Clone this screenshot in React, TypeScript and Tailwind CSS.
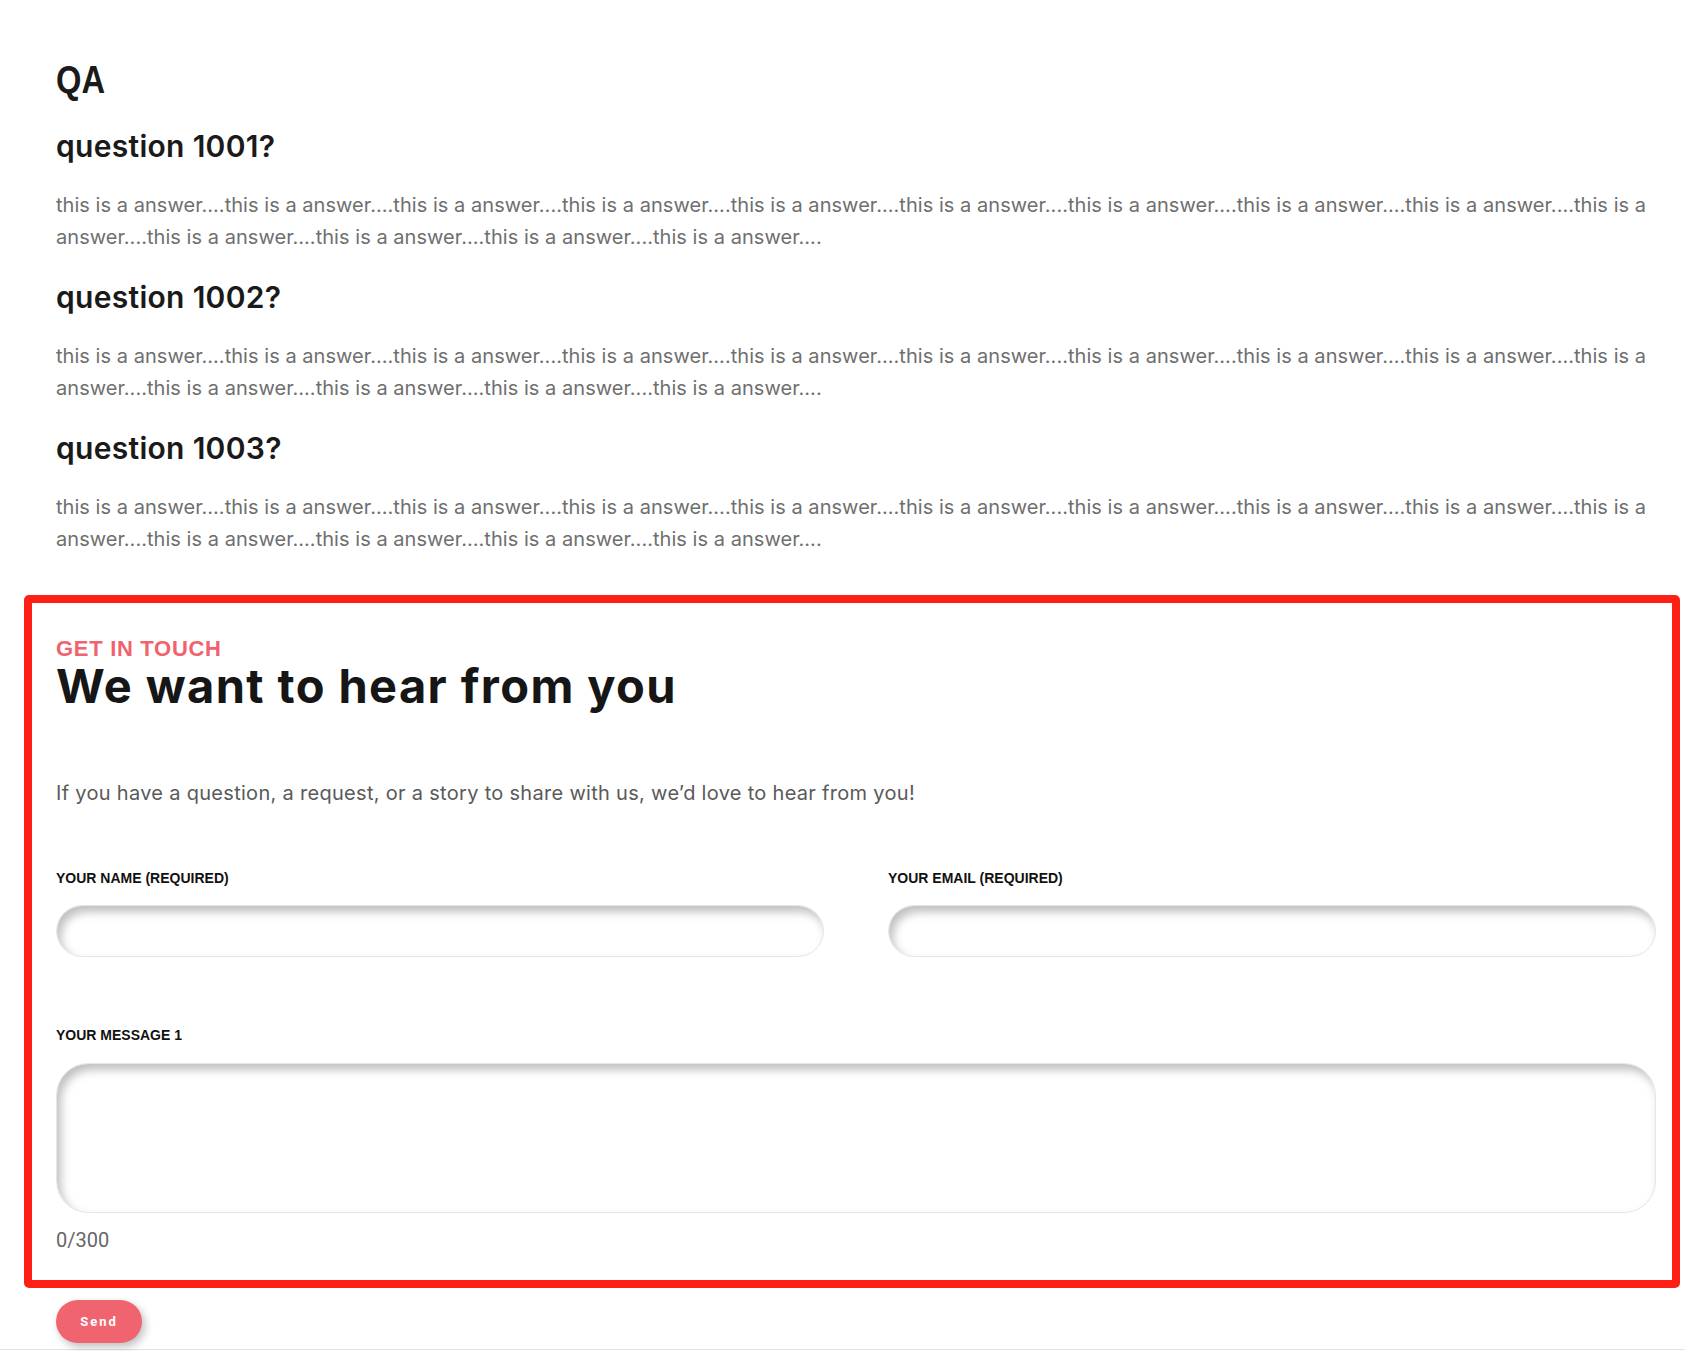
import React from "react";

const ANSWER = "this is a answer....".repeat(14);

function QA({ q, first }: { q: string; first?: boolean }) {
  return (
    <div className={first ? "mt-[29px]" : "mt-[26px]"}>
      <h3 className="font-['Inter',sans-serif] font-semibold text-[30px] leading-[36px] tracking-[0.3px] text-[#1a1a1a]">
        {q}
      </h3>
      <p className="mt-[25px] font-['Inter',sans-serif] text-[20px] leading-[32px] tracking-[0.04px] text-[#6f6f6f]">
        {ANSWER}
      </p>
    </div>
  );
}

export default function App() {
  return (
    <div className="min-h-[1351px] bg-white">
      <div className="pl-[56px] pt-[61px]">
        <div className="w-[1600px]">
          <h2 className="font-['Liberation_Sans',sans-serif] font-bold text-[38px] leading-[38px] text-[#1a1a1a]">
            <span className="inline-block origin-left scale-x-[0.86]">QA</span>
          </h2>
          <QA q="question 1001?" first />
          <QA q="question 1002?" />
          <QA q="question 1003?" />
        </div>
      </div>

      <div className="ml-[24px] mt-[40px] w-[1656px] rounded-[5px] border-[8px] border-[#ff2015] pl-[24px] pr-[16px] pt-[35px] pb-[30px]">
        <div className="font-['Liberation_Sans',sans-serif] font-bold text-[22px] leading-[22px] tracking-[0.7px] text-[#f0626e]">
          GET IN TOUCH
        </div>
        <h2 className="mt-[2px] font-['Inter',sans-serif] font-bold text-[47px] leading-[47px] tracking-[1.4px] text-[#161616]">
          We want to hear from you
        </h2>
        <p className="mt-[68px] font-['Inter',sans-serif] font-normal text-[20px] leading-[32px] tracking-[0.3px] text-[#5a5a5a]">
          If you have a question, a request, or a story to share with us, we’d love to hear from you!
        </p>

        <div className="mt-[62px] grid grid-cols-2 gap-x-[64px]">
          <div>
            <label className="block font-['Liberation_Sans',sans-serif] font-bold text-[14px] leading-[14px] text-[#111111]">
              YOUR NAME (REQUIRED)
            </label>
            <input
              type="text"
              className="mt-[20px] block h-[52px] w-full rounded-full border border-[#e6e6e6] bg-white px-6 outline-none shadow-[inset_4px_6px_10px_rgba(0,0,0,0.25)]"
            />
          </div>
          <div>
            <label className="block font-['Liberation_Sans',sans-serif] font-bold text-[14px] leading-[14px] text-[#111111]">
              YOUR EMAIL (REQUIRED)
            </label>
            <input
              type="email"
              className="mt-[20px] block h-[52px] w-full rounded-full border border-[#e6e6e6] bg-white px-6 outline-none shadow-[inset_4px_6px_10px_rgba(0,0,0,0.25)]"
            />
          </div>
        </div>

        <label className="mt-[71px] block font-['Liberation_Sans',sans-serif] font-bold text-[14px] leading-[14px] text-[#111111]">
          YOUR MESSAGE 1
        </label>
        <textarea className="mt-[21px] block h-[150px] w-full resize-none rounded-[32px] border border-[#e6e6e6] bg-white outline-none shadow-[inset_4px_6px_10px_rgba(0,0,0,0.25)]" />
        <div className="mt-[17px] font-['Roboto',sans-serif] text-[20px] leading-[20px] text-[#666666]">
          0/300
        </div>
      </div>

      <div className="pl-[56px] mt-[12px]">
        <button className="h-[43px] w-[86px] rounded-full bg-[#f0646f] font-['Roboto',sans-serif] font-bold text-[13px] tracking-[2px] text-white shadow-[3px_4px_8px_rgba(0,0,0,0.25)]">
          Send
        </button>
      </div>
      <div className="mt-[6px] border-t border-[#e3e3e3]" />
    </div>
  );
}
